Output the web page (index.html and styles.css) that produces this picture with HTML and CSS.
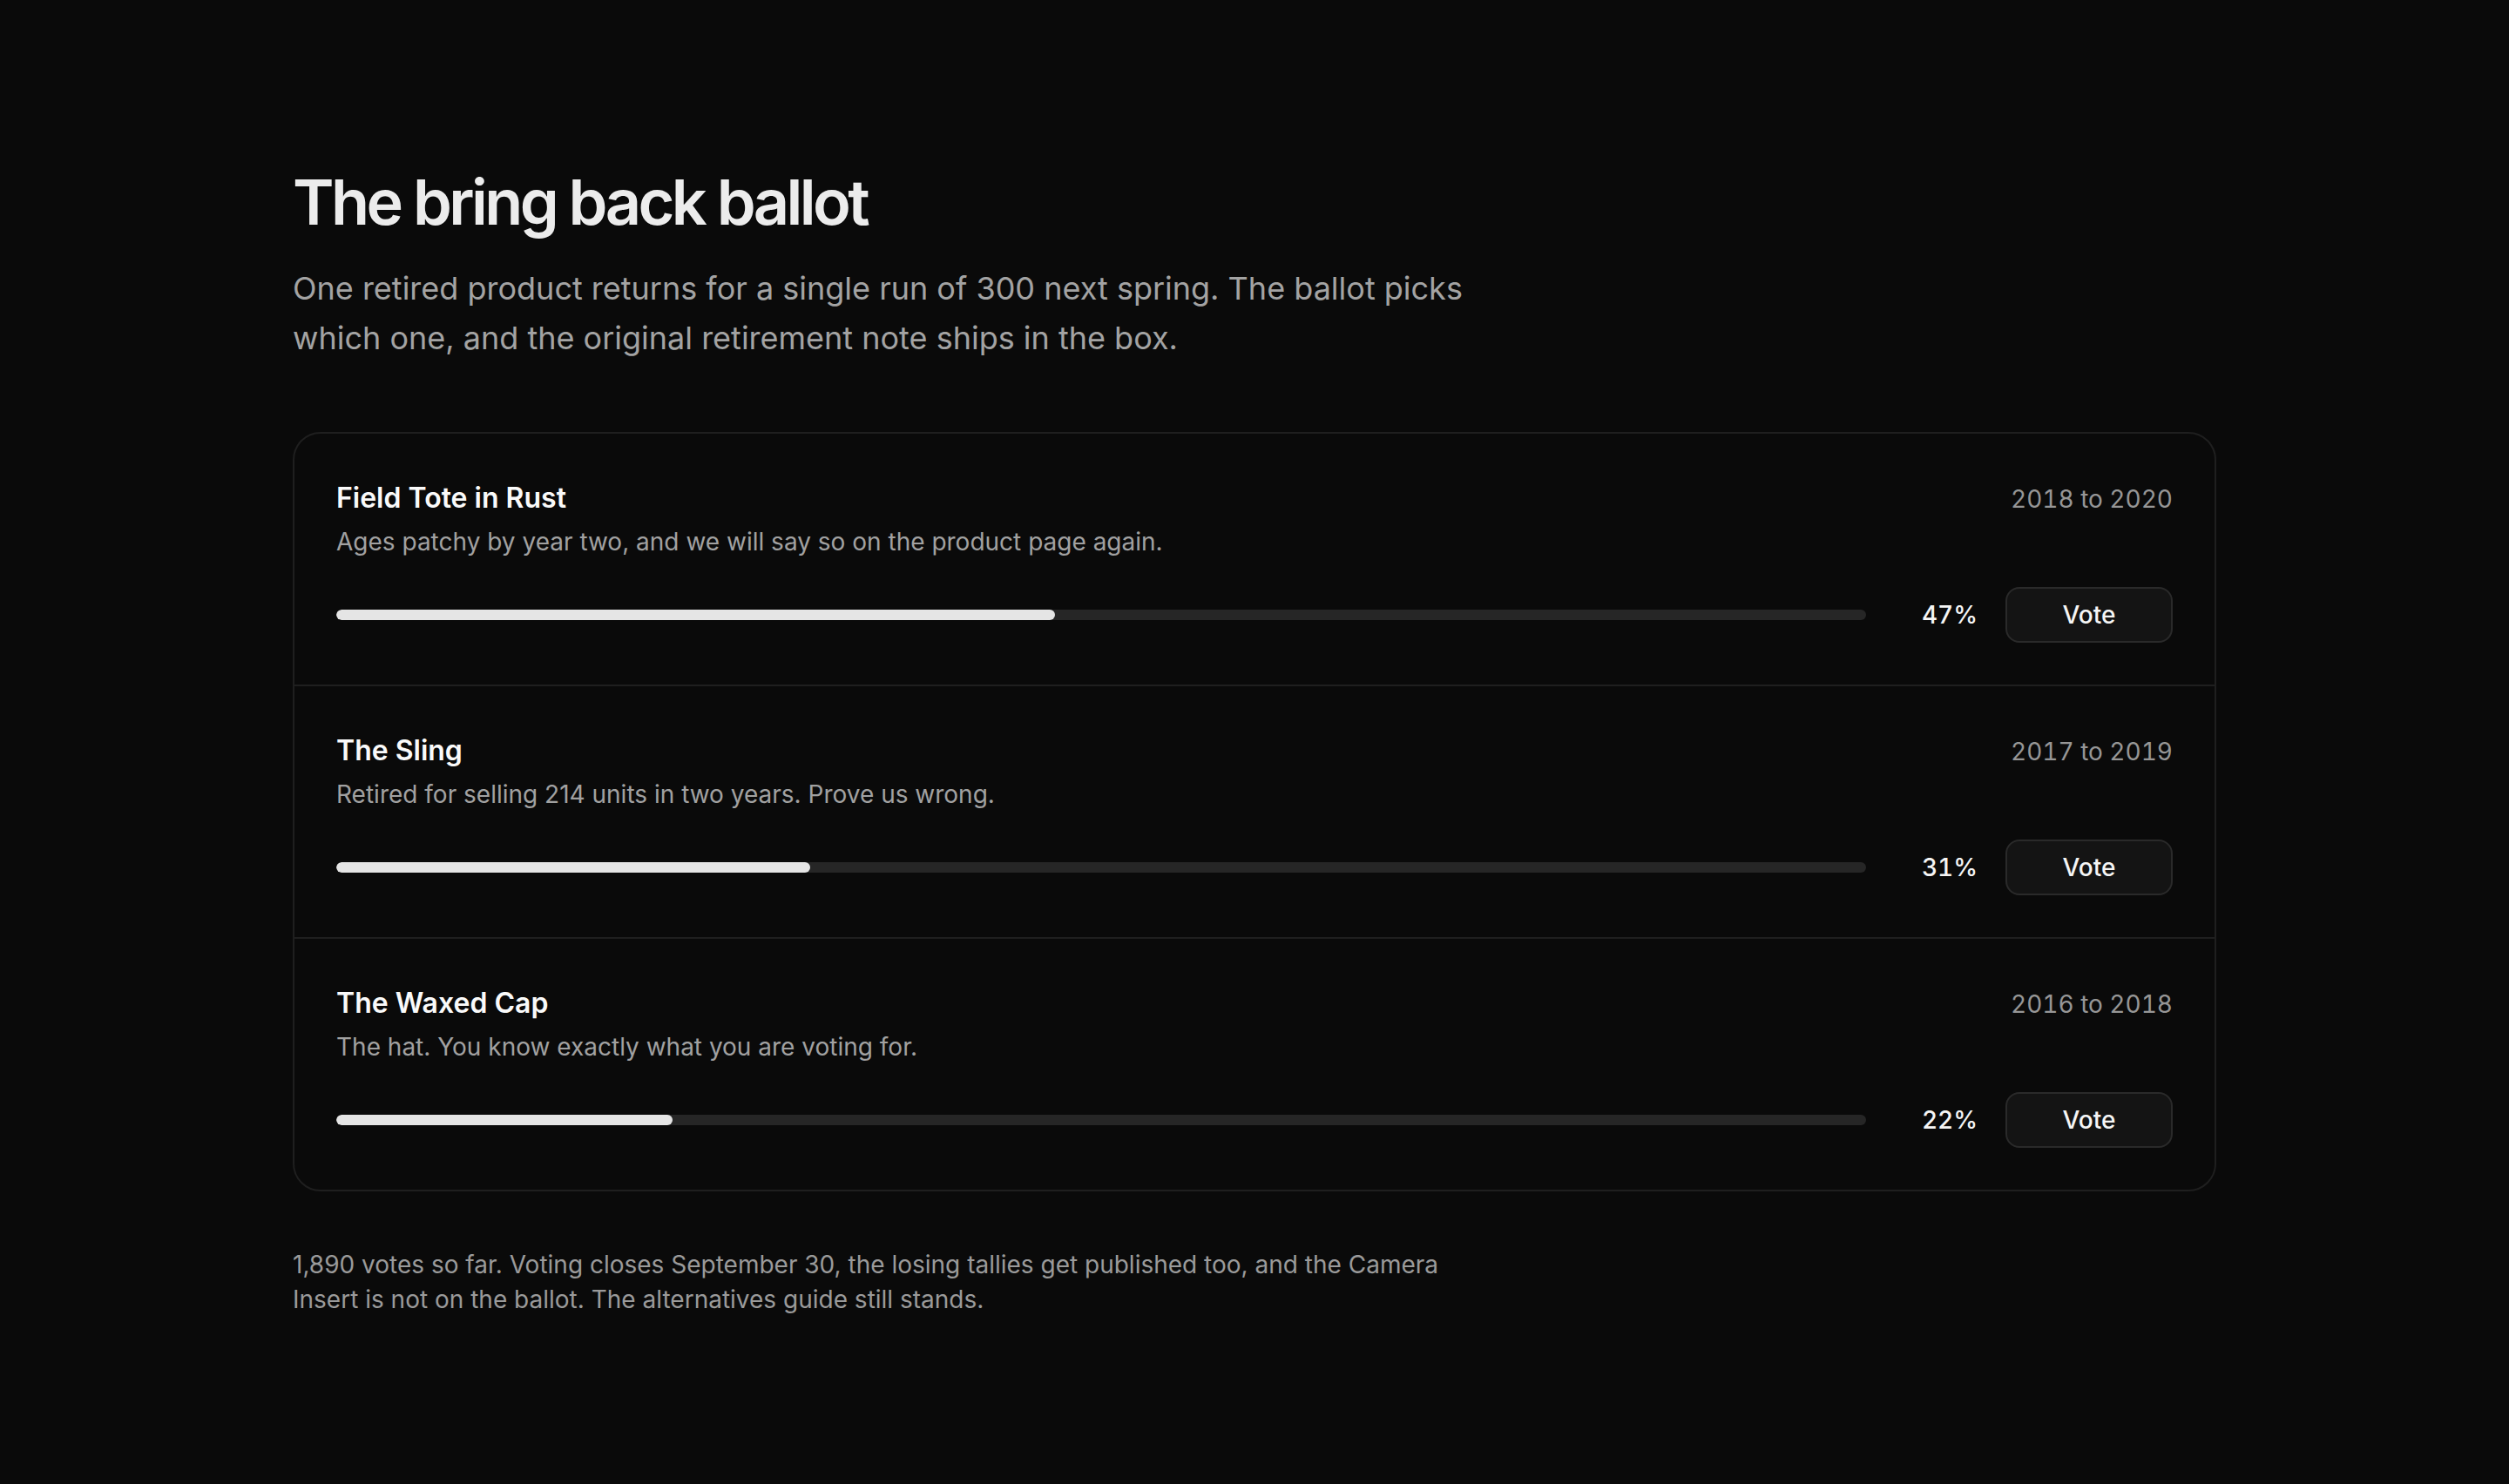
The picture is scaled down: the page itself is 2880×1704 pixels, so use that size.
FILE: index.html
```html
<!DOCTYPE html>
<html lang="en">

<head>
  <meta charset="UTF-8">
  <meta name="viewport" content="width=device-width, initial-scale=1.0">
  <title>The bring back ballot</title>
  <link rel="stylesheet" href="styles.css">
</head>

<body>
  <main class="ballot">
    <h1 class="ballot-title">The bring back ballot</h1>
    <p class="ballot-lede">One retired product returns for a single run of 300 next spring. The ballot picks which one, and the original retirement note ships in the box.</p>

    <ul class="ballot-list">
      <li class="ballot-item">
        <div class="item-head">
          <h2 class="item-name">Field Tote in Rust</h2>
          <span class="item-years">2018 to 2020</span>
        </div>
        <p class="item-note">Ages patchy by year two, and we will say so on the product page again.</p>
        <div class="item-result">
          <div class="bar"><span class="bar-fill" style="width: 47%"></span></div>
          <span class="item-pct">47%</span>
          <button class="vote-btn">Vote</button>
        </div>
      </li>
      <li class="ballot-item">
        <div class="item-head">
          <h2 class="item-name">The Sling</h2>
          <span class="item-years">2017 to 2019</span>
        </div>
        <p class="item-note">Retired for selling 214 units in two years. Prove us wrong.</p>
        <div class="item-result">
          <div class="bar"><span class="bar-fill" style="width: 31%"></span></div>
          <span class="item-pct">31%</span>
          <button class="vote-btn">Vote</button>
        </div>
      </li>
      <li class="ballot-item">
        <div class="item-head">
          <h2 class="item-name">The Waxed Cap</h2>
          <span class="item-years">2016 to 2018</span>
        </div>
        <p class="item-note">The hat. You know exactly what you are voting for.</p>
        <div class="item-result">
          <div class="bar"><span class="bar-fill" style="width: 22%"></span></div>
          <span class="item-pct">22%</span>
          <button class="vote-btn">Vote</button>
        </div>
      </li>
    </ul>

    <p class="ballot-foot">1,890 votes so far. Voting closes September 30, the losing tallies get published too, and the Camera Insert is not on the ballot. The alternatives guide still stands.</p>
  </main>
</body>

</html>
```

FILE: styles.css
```css
* {
  margin: 0;
  padding: 0;
  box-sizing: border-box;
}

body {
  background-color: #0a0a0a;
  color: #ededed;
  font-family: Inter, "Noto Sans", sans-serif;
}

.ballot {
  max-width: 2208px;
  margin: 0 auto;
  padding: 192px 0 160px;
}

.ballot-title {
  font-size: 72px;
  line-height: 80px;
  font-weight: 600;
  letter-spacing: -0.05em;
  color: #ececec;
}

.ballot-lede {
  margin-top: 31px;
  max-width: 1360px;
  font-size: 36px;
  line-height: 57px;
  color: #a3a3a3;
}

.ballot-list {
  list-style: none;
  margin-top: 79px;
  border: 2px solid #1f1f1f;
  border-radius: 32px;
}

.ballot-item {
  padding: 50px 48px 48px;
}

.ballot-item + .ballot-item {
  border-top: 2px solid #1f1f1f;
}

.item-head {
  display: flex;
  justify-content: space-between;
  align-items: baseline;
}

.item-name {
  font-size: 32px;
  line-height: 48px;
  font-weight: 600;
  color: #fafafa;
}

.item-years {
  font-size: 28px;
  font-variant-numeric: tabular-nums;
  color: #969696;
}

.item-note {
  margin-top: 6px;
  font-size: 28px;
  line-height: 40px;
  color: #a1a1a1;
}

.item-result {
  display: flex;
  align-items: center;
  gap: 32px;
  margin-top: 32px;
}

.bar {
  flex: 1;
  height: 12px;
  border-radius: 6px;
  background-color: #262626;
  overflow: hidden;
}

.bar-fill {
  display: block;
  height: 100%;
  border-radius: 6px;
  background-color: #e5e5e5;
}

.item-pct {
  width: 96px;
  text-align: right;
  font-size: 28px;
  font-weight: 500;
  font-variant-numeric: tabular-nums;
  color: #f5f5f5;
}

.vote-btn {
  width: 192px;
  height: 64px;
  border: 2px solid #2a2a2a;
  border-radius: 16px;
  background-color: #141414;
  color: #f5f5f5;
  font-family: inherit;
  font-size: 28px;
  font-weight: 500;
  cursor: pointer;
}

.ballot-foot {
  margin-top: 64px;
  max-width: 1360px;
  font-size: 28px;
  line-height: 40px;
  color: #9a9a9a;
}
```
